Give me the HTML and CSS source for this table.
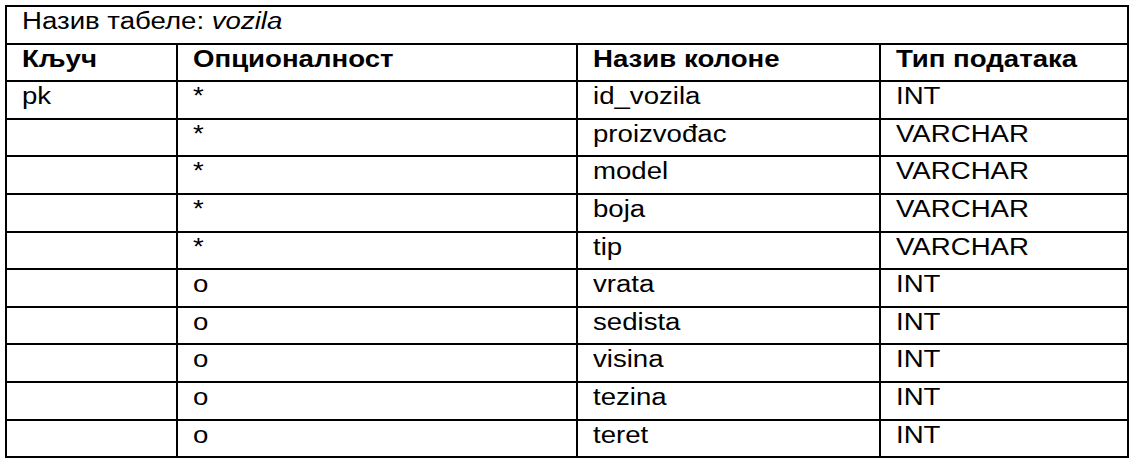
FILE: index.html
```html
<!DOCTYPE html>
<html lang="sr">
<head>
<meta charset="utf-8">
<title>vozila</title>
<link rel="stylesheet" href="styles.css">
</head>
<body>
<table class="schema">
  <colgroup>
    <col class="c-key">
    <col class="c-opt">
    <col class="c-name">
    <col class="c-type">
  </colgroup>
  <tr><td colspan="4"><span class="t">Назив табеле: <i>vozila</i></span></td></tr>
  <tr class="head"><td><span class="t">Кључ</span></td><td><span class="t">Опционалност</span></td><td><span class="t">Назив колоне</span></td><td><span class="t">Тип података</span></td></tr>
  <tr><td><span class="t">pk</span></td><td><span class="t">*</span></td><td><span class="t">id_vozila</span></td><td><span class="t">INT</span></td></tr>
  <tr><td></td><td><span class="t">*</span></td><td><span class="t">proizvođac</span></td><td><span class="t">VARCHAR</span></td></tr>
  <tr><td></td><td><span class="t">*</span></td><td><span class="t">model</span></td><td><span class="t">VARCHAR</span></td></tr>
  <tr><td></td><td><span class="t">*</span></td><td><span class="t">boja</span></td><td><span class="t">VARCHAR</span></td></tr>
  <tr><td></td><td><span class="t">*</span></td><td><span class="t">tip</span></td><td><span class="t">VARCHAR</span></td></tr>
  <tr><td></td><td><span class="t">o</span></td><td><span class="t">vrata</span></td><td><span class="t">INT</span></td></tr>
  <tr><td></td><td><span class="t">o</span></td><td><span class="t">sedista</span></td><td><span class="t">INT</span></td></tr>
  <tr><td></td><td><span class="t">o</span></td><td><span class="t">visina</span></td><td><span class="t">INT</span></td></tr>
  <tr><td></td><td><span class="t">o</span></td><td><span class="t">tezina</span></td><td><span class="t">INT</span></td></tr>
  <tr><td></td><td><span class="t">o</span></td><td><span class="t">teret</span></td><td><span class="t">INT</span></td></tr>
</table>
</body>
</html>
```
FILE: styles.css
```css
html, body {
  margin: 0;
  padding: 0;
  background: #ffffff;
}
body {
  font-family: "Liberation Sans", Arial, sans-serif;
  font-size: 23px;
  color: #000000;
}
.schema {
  margin: 5px 0 0 5px;
  width: 1124px;
  border-collapse: collapse;
  table-layout: fixed;
}
.c-key { width: 171px; }
.c-opt { width: 400px; }
.c-name { width: 303px; }
.c-type { width: 248px; }
.schema tr {
  height: 37.6px;
}
.schema td {
  border: 2px solid #000000;
  padding: 1px 15px 0 15px;
  vertical-align: top;
  line-height: 26px;
  white-space: nowrap;
}
.head td {
  font-weight: bold;
}
.t {
  display: inline-block;
  transform: scaleX(1.2);
  transform-origin: left center;
}
```
